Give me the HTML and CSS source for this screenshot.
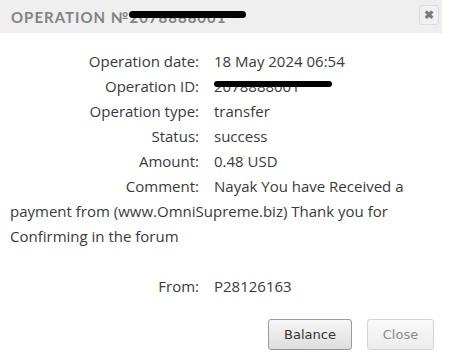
FILE: index.html
```html
<!DOCTYPE html>
<html lang="en">
<head>
  <meta charset="UTF-8" />
  <title>Operation</title>
  <link rel="stylesheet" href="styles.css">
</head>
<body>

  <div class="dialog">
    <header class="dialog-head">
      <h1>Operation №<span class="masked">2078888001<i class="scribble"></i></span></h1>
      <button class="close-x" title="Close">&#10006;</button>
    </header>

    <div class="dialog-body">
      <div class="row"><span class="label">Operation date:</span>18 May 2024 06:54</div>
      <div class="row"><span class="label">Operation ID:</span><span class="masked">2078888001<i class="scribble id"></i></span></div>
      <div class="row"><span class="label">Operation type:</span>transfer</div>
      <div class="row"><span class="label">Status:</span>success</div>
      <div class="row"><span class="label">Amount:</span>0.48 USD</div>
      <div class="row"><span class="label">Comment:</span>Nayak You have Received a payment from (www.OmniSupreme.biz) Thank you for Confirming in the forum</div>
      <div class="row empty"></div>
      <div class="row"><span class="label">From:</span>P28126163</div>
    </div>

    <div class="dialog-foot">
      <button class="btn btn-balance">Balance</button>
      <button class="btn btn-light">Close</button>
    </div>
  </div>

</body>
</html>
```

FILE: styles.css
```css
body {
  margin: 0;
  background: #fff;
  font-family: "Open Sans", Arial, sans-serif;
  color: #3a3a3a;
}
.dialog {
  width: 442px;
}
.dialog-head {
  height: 33px;
  background: #efefef;
  display: flex;
  align-items: center;
  justify-content: space-between;
  padding: 0 3px 0 11px;
}
.dialog-head h1 {
  margin: 0;
  font-family: "Lato", sans-serif;
  font-size: 15px;
  font-weight: 700;
  letter-spacing: 1px;
  text-transform: uppercase;
  color: #838383;
}
.masked {
  position: relative;
}
.scribble {
  position: absolute;
  left: 0;
  right: -20px;
  top: 3px;
  height: 7px;
  background: #000;
  border-radius: 4px;
}
.scribble.id {
  top: 5px;
  height: 6px;
  right: -32px;
}
.close-x {
  width: 20px;
  height: 20px;
  padding: 0;
  border: 1px solid #dcdcdc;
  border-radius: 3px;
  background: #f1f1f1;
  color: #7a7a7a;
  font-size: 12px;
  font-weight: bold;
  line-height: 18px;
  margin-top: -4px;
}
.dialog-body {
  padding: 16px 10px 0 10px;
  font-size: 15px;
  line-height: 25px;
}
.row.empty {
  height: 25px;
}
.label {
  display: inline-block;
  width: 189px;
  text-align: right;
  margin-right: 15px;
}
.dialog-foot {
  display: flex;
  justify-content: flex-end;
  gap: 15px;
  padding: 20px 8px 0 0;
}
.btn {
  width: 67px;
  height: 31px;
  padding: 0;
  font-family: "DejaVu Sans", Verdana, sans-serif;
  font-size: 13px;
  color: #333;
  border: 1px solid #9a9a9a;
  border-radius: 3px;
  background: linear-gradient(#f7f7f7, #dedede);
}
.btn-balance {
  width: 84px;
}
.btn-light {
  color: #8a8a8a;
  border-color: #d4d4d4;
  background: linear-gradient(#fafafa, #ececec);
}
```
